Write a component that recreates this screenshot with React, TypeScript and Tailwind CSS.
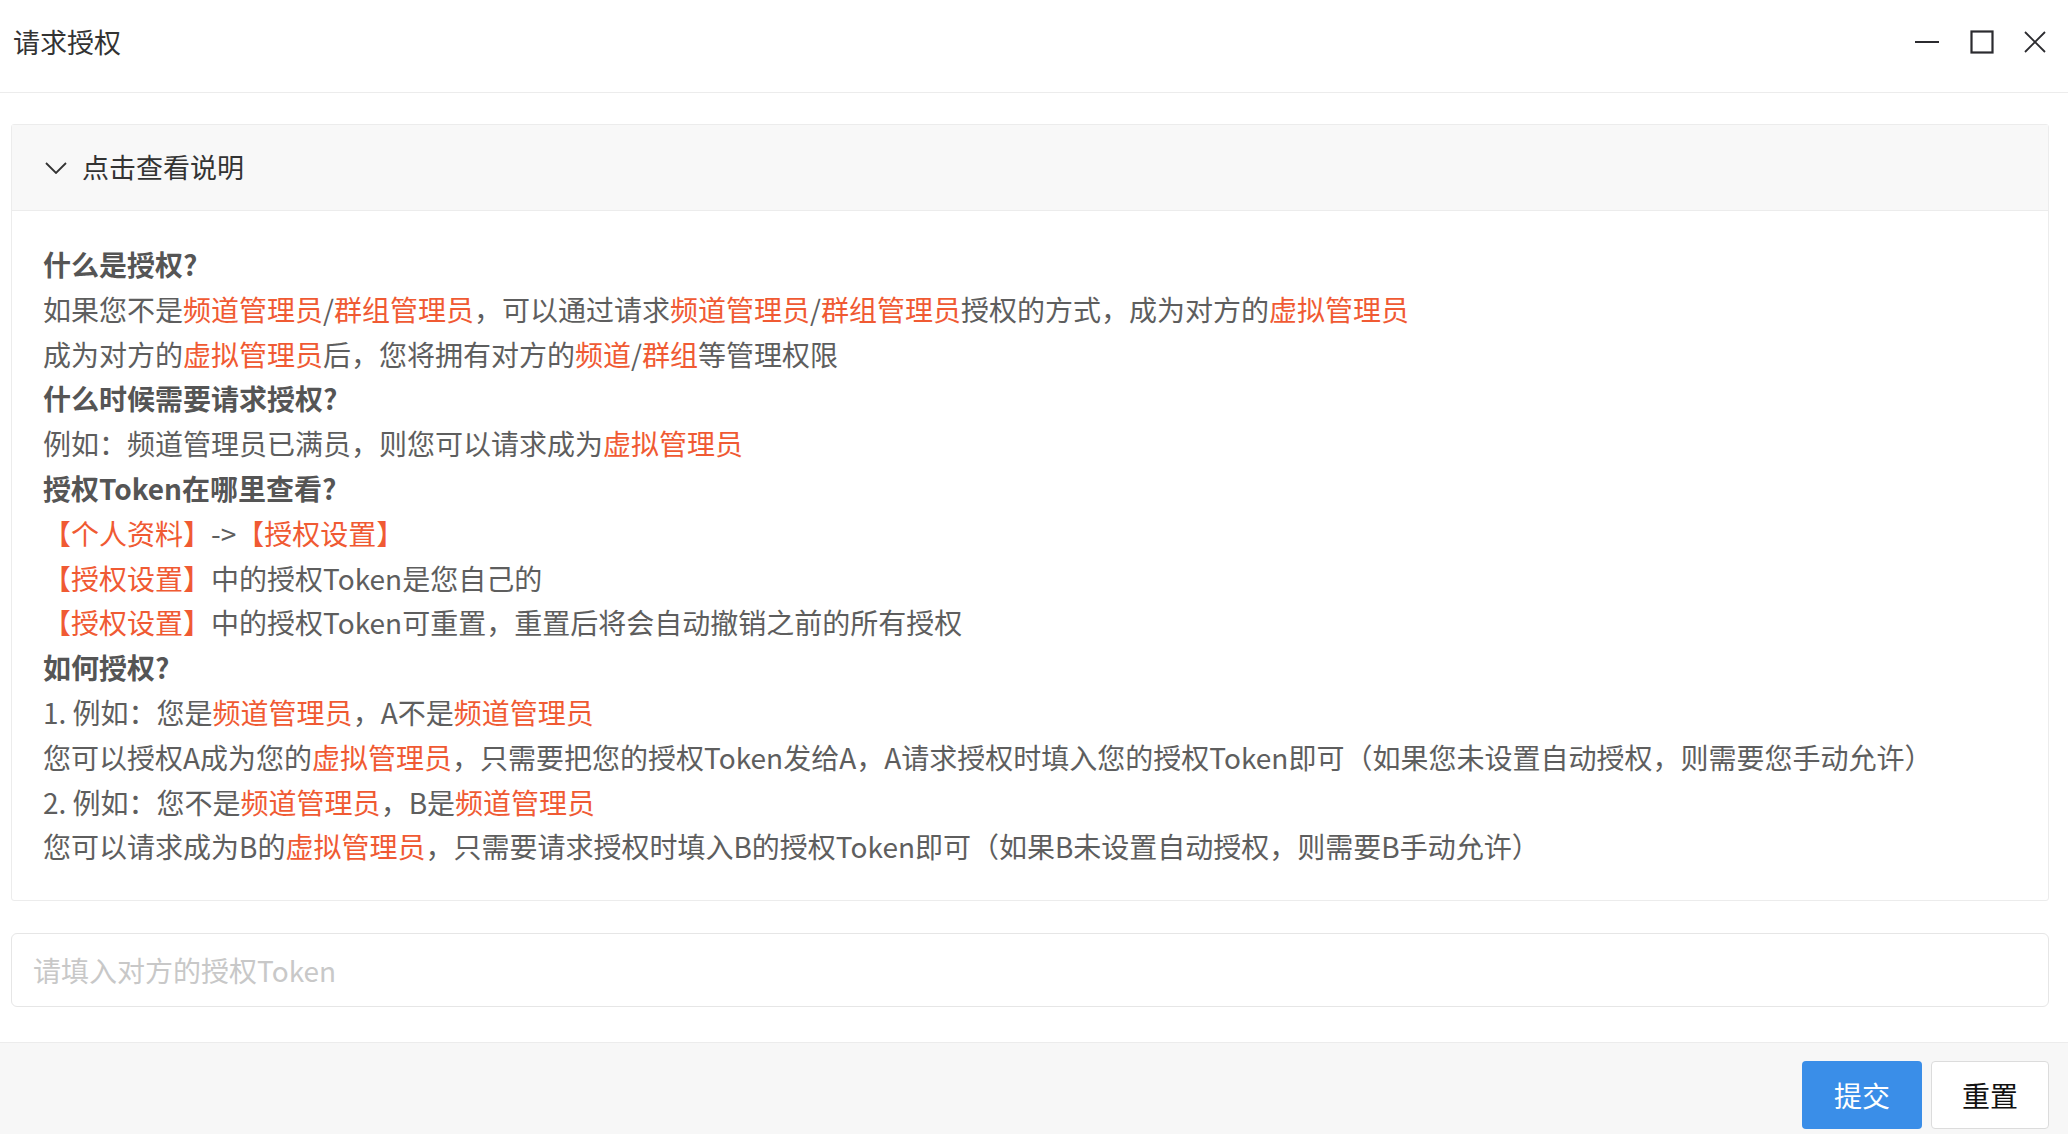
import type { ReactNode } from "react";

function R({ children }: { children: ReactNode }) {
  return <span className="text-[#f05a33]">{children}</span>;
}

function H({ children }: { children: ReactNode }) {
  return <p className="font-bold text-[#555]">{children}</p>;
}

export default function App() {
  return (
    <div
      className="w-[2068px] h-[1134px] flex flex-col bg-white text-[#5e5e5e] overflow-hidden"
      style={{ fontFamily: '"Noto Sans CJK SC", "Noto Sans", sans-serif' }}
    >
      {/* title bar */}
      <header className="h-[93px] shrink-0 flex items-center justify-between pl-[13px] pr-[22px] pb-[8px] border-b border-[#ececec]">
        <h1 className="text-[27px] text-[#333]">请求授权</h1>
        <div className="flex items-center gap-[30px] text-[#2b2b2f]">
          <svg width="26" height="26" viewBox="0 0 26 26" fill="none" stroke="currentColor" strokeWidth="2">
            <path d="M1 13h24" />
          </svg>
          <svg width="24" height="24" viewBox="0 0 24 24" fill="none" stroke="currentColor" strokeWidth="2.2">
            <rect x="1.5" y="1.5" width="21" height="21" />
          </svg>
          <svg width="22" height="22" viewBox="0 0 22 22" fill="none" stroke="currentColor" strokeWidth="1.8">
            <path d="M1 1l20 20M21 1L1 21" />
          </svg>
        </div>
      </header>

      <main className="flex-1 flex flex-col pt-[31px] pl-[11px] pr-[19px]">
        {/* collapse panel */}
        <section className="border border-[#ececec] rounded-[3px]">
          <div className="h-[86px] flex items-center gap-[15px] pl-[33px] bg-[#f8f8f8] border-b border-[#ececec]">
            <svg width="22" height="12" viewBox="0 0 22 12" fill="none" stroke="#333" strokeWidth="1.8">
              <path d="M1 1l10 10L21 1" />
            </svg>
            <span className="text-[27px] text-[#333]">点击查看说明</span>
          </div>
          <div className="px-[31px] pt-[31px] pb-[31px] text-[28px] leading-[1.6]">
            <H>什么是授权?</H>
            <p>
              如果您不是<R>频道管理员</R>/<R>群组管理员</R>，可以通过请求<R>频道管理员</R>/<R>群组管理员</R>授权的方式，成为对方的<R>虚拟管理员</R>
            </p>
            <p>
              成为对方的<R>虚拟管理员</R>后，您将拥有对方的<R>频道</R>/<R>群组</R>等管理权限
            </p>
            <H>什么时候需要请求授权?</H>
            <p>
              例如：频道管理员已满员，则您可以请求成为<R>虚拟管理员</R>
            </p>
            <H>授权Token在哪里查看?</H>
            <p>
              <R>【个人资料】</R>-&gt;<R>【授权设置】</R>
            </p>
            <p>
              <R>【授权设置】</R>中的授权Token是您自己的
            </p>
            <p>
              <R>【授权设置】</R>中的授权Token可重置，重置后将会自动撤销之前的所有授权
            </p>
            <H>如何授权?</H>
            <p>
              1. 例如：您是<R>频道管理员</R>，A不是<R>频道管理员</R>
            </p>
            <p>
              您可以授权A成为您的<R>虚拟管理员</R>，只需要把您的授权Token发给A，A请求授权时填入您的授权Token即可（如果您未设置自动授权，则需要您手动允许）
            </p>
            <p>
              2. 例如：您不是<R>频道管理员</R>，B是<R>频道管理员</R>
            </p>
            <p>
              您可以请求成为B的<R>虚拟管理员</R>，只需要请求授权时填入B的授权Token即可（如果B未设置自动授权，则需要B手动允许）
            </p>
          </div>
        </section>

        <input
          className="mt-[32px] h-[74px] w-full rounded-[6px] border border-[#e6e6e6] px-[21px] text-[28px] outline-none placeholder:text-[#c8c8c8]"
          placeholder="请填入对方的授权Token"
        />
      </main>

      {/* footer */}
      <footer className="h-[92px] shrink-0 flex items-start justify-end gap-[9px] pt-[18px] pr-[19px] bg-[#f7f7f7] border-t border-[#ececec]">
        <button className="w-[120px] h-[68px] rounded-[4px] bg-[#3a8ee8] text-white text-[28px]">提交</button>
        <button className="w-[118px] h-[68px] rounded-[4px] bg-white border border-[#dcdcdc] text-[#111] text-[28px]">
          重置
        </button>
      </footer>
    </div>
  );
}
